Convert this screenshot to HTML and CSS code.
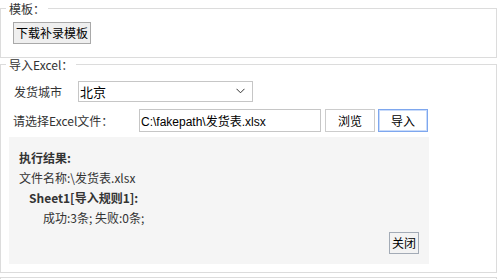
FILE: index.html
```html
<!DOCTYPE html>
<html lang="zh-CN">

<head>
    <meta charset="UTF-8">
    <meta name="viewport" content="width=device-width, initial-scale=1.0">
    <title>导入补录</title>
    <link rel="stylesheet" href="styles.css">
</head>

<body>
    <!-- 模板下载 -->
    <fieldset class="group group-template">
        <legend>模板：</legend>
        <div class="template-row">
            <button class="btn btn-gray">下载补录模板</button>
        </div>
    </fieldset>

    <!-- 导入Excel -->
    <fieldset class="group group-import">
        <legend>导入Excel：</legend>
        <div class="form-row row-city">
            <label class="label label-city">发货城市</label>
            <span class="select-wrap">
                <select class="select">
                    <option>北京</option>
                    <option>上海</option>
                    <option>广州</option>
                </select>
                <svg class="select-arrow" width="9" height="6" viewBox="0 0 9 6">
                    <path d="M0.5 0.8 L4.5 4.8 L8.5 0.8" fill="none" stroke="#333" stroke-width="1" />
                </svg>
            </span>
        </div>
        <div class="form-row row-file">
            <label class="label label-file">请选择Excel文件：</label>
            <input class="file-path" type="text" value="C:\fakepath\发货表.xlsx">
            <button class="btn btn-white btn-browse">浏览</button>
            <button class="btn btn-white btn-import">导入</button>
        </div>

        <!-- 执行结果 -->
        <div class="result">
            <div class="result-title">执行结果:</div>
            <div class="result-file">文件名称:\发货表.xlsx</div>
            <div class="sheet-name">Sheet1[导入规则1]:</div>
            <div class="sheet-stat">成功:3条; 失败:0条;</div>
            <div class="result-foot">
                <button class="btn btn-close">关闭</button>
            </div>
        </div>
    </fieldset>

    <div class="group-next"></div>
</body>

</html>
```

FILE: styles.css
```css
:root {
    --line: #dcdcdc;
    --text: #333333;
    --panel: #f5f5f5;
}

* {
    margin: 0;
    padding: 0;
    box-sizing: border-box;
}

body {
    font-family: "Noto Sans CJK SC", sans-serif;
    font-size: 12px;
    color: var(--text);
    background: #FFFFFF;
}

/* 分组框 */
.group {
    border: 1px solid var(--line);
    padding: 0 5px;
    min-width: 0;
}

.group legend {
    padding: 0 3px;
    font-size: 12px;
    line-height: 13px;
    color: var(--text);
}

.group-template {
    margin-top: 2px;
    padding-bottom: 13px;
}

.template-row {
    padding: 7px 0 0 7px;
}

.group-import {
    padding-bottom: 8px;
}

.group-next {
    margin-top: 4px;
    height: 10px;
    border: 1px solid var(--line);
    border-bottom: none;
}

/* 按钮 */
.btn {
    font-family: "Noto Sans CJK SC", sans-serif;
    font-size: 12px;
    color: #000000;
    height: 22px;
    padding: 0 2px;
    line-height: 20px;
    cursor: pointer;
}

.btn-gray {
    background: #efefef;
    border: 1px solid #a9a9a9;
}

.btn-white {
    width: 50px;
    height: 23px;
    background: #FFFFFF;
    border: 1px solid #cccccc;
}

.btn-browse {
    margin-left: 4px;
}

.btn-import {
    margin-left: 3px;
    border-color: #7ea7ee;
    box-shadow: inset 0 0 0 1px #c9dbfa;
}

/* 表单行 */
.form-row {
    display: flex;
    align-items: center;
}

.row-city {
    margin-top: 10px;
}

.row-file {
    margin-top: 7px;
}

.label {
    flex-shrink: 0;
    color: var(--text);
}

.label-city {
    width: 72px;
    padding-left: 8px;
}

.label-file {
    width: 133px;
    padding-left: 7px;
}

.select-wrap {
    position: relative;
    display: block;
    width: 175px;
    height: 21px;
}

.select {
    appearance: none;
    width: 100%;
    height: 100%;
    padding: 0 20px 0 1px;
    border: 1px solid #c6c6c6;
    background: #FFFFFF;
    font-family: "Noto Sans CJK SC", sans-serif;
    font-size: 13px;
    color: #000000;
    outline: none;
}

.select-arrow {
    position: absolute;
    right: 8px;
    top: 7px;
    pointer-events: none;
}

.file-path {
    width: 182px;
    height: 23px;
    padding: 0 1px;
    border: 1px solid #c6c6c6;
    font-family: "Liberation Sans", "Noto Sans CJK SC", sans-serif;
    font-size: 12px;
    color: #000000;
    outline: none;
}

/* 执行结果 */
.result {
    margin: 5px 0 0 3px;
    width: 420px;
    height: 127px;
    padding: 11px 10px 10px;
    background: var(--panel);
    line-height: 20px;
}

.result-title {
    font-weight: bold;
}

.sheet-name {
    padding-left: 10px;
    font-weight: bold;
}

.sheet-stat {
    padding-left: 24px;
}

.result-foot {
    margin-top: 4px;
    text-align: right;
    line-height: 0;
}

.btn-close {
    width: 30px;
    background: #f3f3f3;
    border: 1px solid #a3abb6;
}
```
